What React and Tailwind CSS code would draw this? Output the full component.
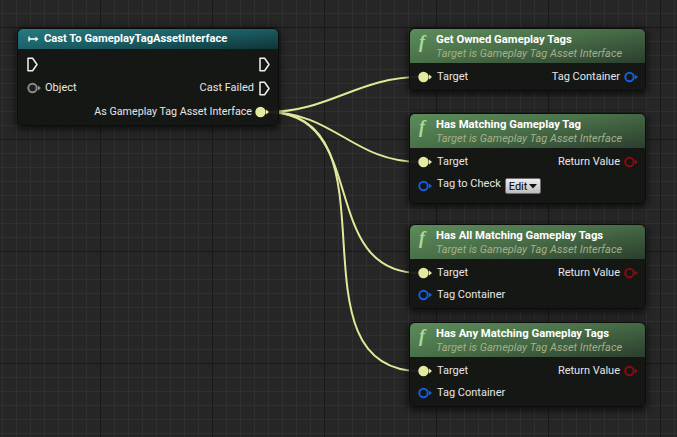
import React from "react";

const font = { fontFamily: "Roboto, 'Noto Sans', sans-serif" };

function Grid() {
  const fineV = [];
  for (let x = 2; x < 677; x += 14) fineV.push(x);
  const fineH = [];
  for (let y = 13; y < 437; y += 14) fineH.push(y);
  return (
    <svg className="absolute inset-0" width="677" height="437">
      {fineV.map((x) => (
        <rect key={"v" + x} x={x} y="0" width="1" height="437" fill="#303030" />
      ))}
      {fineH.map((y) => (
        <rect key={"h" + y} x="0" y={y} width="677" height="1" fill="#303030" />
      ))}
      {[100, 212, 324, 436, 548, 660].map((x) => (
        <rect key={"V" + x} x={x} y="0" width="1" height="437" fill="#191919" />
      ))}
      {[27, 139, 251, 363].map((y) => (
        <rect key={"H" + y} x="0" y={y} width="677" height="1" fill="#191919" />
      ))}
    </svg>
  );
}

function Wires() {
  const d = [
    "M267 112 C329 112 358 77 420 77",
    "M267 112 C334 112 353 162 420 162",
    "M267 112 C371 112 316 273 420 273",
    "M267 112 C404 112 283 371 420 371",
  ];
  return (
    <svg className="absolute inset-0" width="677" height="437">
      {d.map((p) => (
        <path key={p} d={p} fill="none" stroke="#e2e89a" strokeWidth="2" />
      ))}
    </svg>
  );
}

function ExecPin() {
  return (
    <svg width="11" height="15" viewBox="0 0 11 15">
      <path
        d="M1 1.2 H5.6 L10 7.5 L5.6 13.8 H1 Z"
        fill="none"
        stroke="#f2f2f2"
        strokeWidth="1.5"
        strokeLinejoin="round"
      />
    </svg>
  );
}

function DataPin({ color, filled, inner = "#141614" }) {
  return (
    <svg width="15" height="12" viewBox="0 0 15 12">
      <circle
        cx="5.5"
        cy="6"
        r="4.2"
        fill={filled ? color : inner}
        stroke={color}
        strokeWidth="2"
      />
      <path d="M11 3.6 L14 6 L11 8.4 Z" fill={color} />
    </svg>
  );
}

function FuncHeader({ title }) {
  return (
    <div className="flex h-[34px] items-start gap-[4px] rounded-t-[5px] bg-[linear-gradient(170deg,#5d8c5b_0%,#4a7149_45%,#2b3e2e_100%)] pl-[9px] pt-[4px]">
      <span
        className="w-[13px] pt-[1px] text-[18px] font-bold italic leading-[17px] text-[#a6dc97]"
        style={{ fontFamily: "'Liberation Serif', serif" }}
      >
        f
      </span>
      <div className="flex flex-col">
        <span className="text-[11.3px] font-bold leading-[14px] text-white">
          {title}
        </span>
        <span className="text-[11px] italic leading-[14px] text-[#a5b08a]">
          Target is Gameplay Tag Asset Interface
        </span>
      </div>
    </div>
  );
}

function Node({ left, top, width, children }) {
  return (
    <div
      className="absolute rounded-[6px] border border-[#0b0c0b] bg-[#141614]/95 shadow-[0_2px_6px_2px_rgba(0,0,0,0.55)]"
      style={{ left, top, width }}
    >
      {children}
    </div>
  );
}

function TargetRow({ right }) {
  return (
    <div className="flex h-[22px] items-center justify-between pl-[8px] pr-[6px]">
      <div className="flex items-center gap-[4px]">
        <DataPin color="#e4eb9f" filled />
        <span className="text-[11px] text-[#e6e6e6]">Target</span>
      </div>
      {right}
    </div>
  );
}

function OutPin({ label, color }) {
  return (
    <div className="flex items-center gap-[4px]">
      <span className="text-[11px] text-[#e6e6e6]">{label}</span>
      <DataPin color={color} />
    </div>
  );
}

function InPin({ label, color }) {
  return (
    <div className="flex h-[22px] items-center gap-[4px] pl-[8px]">
      <DataPin color={color} />
      <span className="text-[11px] text-[#e6e6e6]">{label}</span>
    </div>
  );
}

export default function App() {
  return (
    <div
      className="relative h-[437px] w-[677px] overflow-hidden bg-[#262626]"
      style={font}
    >
      <Grid />
      <Wires />

      <Node left={17} top={28} width={262}>
        <div className="flex h-[20px] items-center gap-[5px] rounded-t-[5px] bg-[linear-gradient(175deg,#267a80_0%,#1a5f65_50%,#0f3438_100%)] pl-[10px]">
          <svg width="11" height="8" viewBox="0 0 11 8">
            <path d="M1 1.5 V6.5 M1 4 H9" stroke="#fff" strokeWidth="1.4" />
            <path d="M7.5 1.5 L10.5 4 L7.5 6.5 Z" fill="#fff" />
          </svg>
          <span className="text-[11.2px] font-bold text-white">
            Cast To GameplayTagAssetInterface
          </span>
        </div>
        <div className="pb-[1px] pt-[3px]">
          <div className="flex h-[24px] items-center justify-between pl-[9px] pr-[8px]">
            <ExecPin />
            <ExecPin />
          </div>
          <div className="flex h-[24px] items-center justify-between pl-[9px] pr-[8px]">
            <div className="flex items-center gap-[3px]">
              <DataPin color="#8a8a8a" inner="#1e1e1e" />
              <span className="text-[11px] text-[#e6e6e6]">Object</span>
            </div>
            <div className="flex items-center gap-[5px]">
              <span className="text-[11px] text-[#e6e6e6]">Cast Failed</span>
              <ExecPin />
            </div>
          </div>
          <div className="flex h-[24px] items-center justify-end gap-[3px] pr-[8px]">
            <span className="text-[10.7px] text-[#e6e6e6]">
              As Gameplay Tag Asset Interface
            </span>
            <DataPin color="#e4eb9f" filled />
          </div>
        </div>
      </Node>

      <Node left={409} top={28} width={237}>
        <FuncHeader title="Get Owned Gameplay Tags" />
        <div className="pb-[2px] pt-[3px]">
          <TargetRow right={<OutPin label="Tag Container" color="#1060e0" />} />
        </div>
      </Node>

      <Node left={409} top={113} width={237}>
        <FuncHeader title="Has Matching Gameplay Tag" />
        <div className="pb-[4px] pt-[3px]">
          <TargetRow right={<OutPin label="Return Value" color="#8c0b0b" />} />
          <div className="flex h-[26px] items-center gap-[4px] pl-[8px]">
            <DataPin color="#1060e0" />
            <span className="-mt-[3px] text-[11px] text-[#e6e6e6]">
              Tag to Check
            </span>
            <div className="flex h-[16px] items-center gap-[2px] rounded-[2px] border border-[#6e6e6e] bg-[linear-gradient(180deg,#ececec,#bdbdbd)] px-[3px]">
              <span className="text-[11px] leading-none text-black">Edit</span>
              <svg width="8" height="5" viewBox="0 0 8 5">
                <path d="M0 0 H8 L4 4.5 Z" fill="#111" />
              </svg>
            </div>
          </div>
        </div>
      </Node>

      <Node left={409} top={224} width={237}>
        <FuncHeader title="Has All Matching Gameplay Tags" />
        <div className="pb-[2px] pt-[3px]">
          <TargetRow right={<OutPin label="Return Value" color="#8c0b0b" />} />
          <InPin label="Tag Container" color="#1060e0" />
        </div>
      </Node>

      <Node left={409} top={322} width={237}>
        <FuncHeader title="Has Any Matching Gameplay Tags" />
        <div className="pb-[2px] pt-[3px]">
          <TargetRow right={<OutPin label="Return Value" color="#8c0b0b" />} />
          <InPin label="Tag Container" color="#1060e0" />
        </div>
      </Node>
    </div>
  );
}
